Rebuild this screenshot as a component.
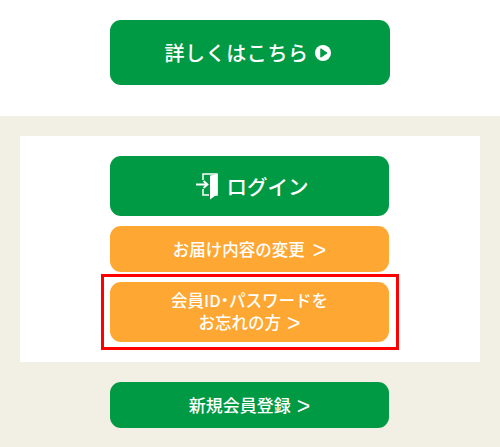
<div class="page">
  <section class="top">
    <a class="btn green big" href="#top">
      詳しくはこちら
      <svg class="play" viewBox="0 0 16 16" width="16" height="16" aria-hidden="true">
        <circle cx="8" cy="8" r="8" fill="#fff" />
        <path d="M5.8 3.8 L12 8 L5.8 12.2 Z" fill="#009a44" stroke="#009a44" stroke-width="1" stroke-linejoin="round" />
      </svg>
    </a>
  </section>

  <section class="member">
    <div class="panel">
      <a class="btn green login" href="#login">
        <svg class="door" viewBox="0 0 22 27" width="22" height="27" aria-hidden="true">
          <path d="M7 7 V1 H21 V22 H14" fill="none" stroke="#fff" stroke-width="1.5" />
          <path d="M7 16 V22 H13" fill="none" stroke="#fff" stroke-width="1.5" />
          <path d="M14 2.5 L21.5 1 V21 L14 26.5 Z" fill="#fff" />
          <path d="M0 11.5 H11 M7.5 8 L11.5 11.5 L7.5 15" fill="none" stroke="#fff" stroke-width="1.8" />
        </svg>
        ログイン
      </a>
      <a class="btn orange change" href="#change">
        <span>お届け内容の変更<span class="arrow">&gt;</span></span>
      </a>
      <div class="marked">
        <a class="btn orange forgot" href="#forgot">
          <span>会員ID<span class="dot">・</span>パスワードを<br />お忘れの方<span class="arrow">&gt;</span></span>
        </a>
        <div class="redbox"></div>
      </div>
    </div>
    <a class="btn green register" href="#register">
      <span>新規会員登録<span class="arrow">&gt;</span></span>
    </a>
  </section>
</div>

<style>
  :global(body) {
    margin: 0;
    background: #fff;
  }

  .page {
    width: 500px;
    height: 447px;
    overflow: hidden;
    font-family: "Noto Sans CJK JP", "Noto Sans", sans-serif;
    font-weight: 500;
  }

  .top {
    height: 116px;
    padding-top: 20px;
    box-sizing: border-box;
  }

  .member {
    height: 331px;
    box-sizing: border-box;
    padding: 20px 20px 0;
    background: #f2efe4;
  }

  .panel {
    display: flex;
    flex-direction: column;
    align-items: flex-start;
    gap: 10px;
    height: 226px;
    box-sizing: border-box;
    padding: 20px 0 0 90px;
    background: #fff;
  }

  .btn {
    display: flex;
    align-items: center;
    justify-content: center;
    box-sizing: border-box;
    width: 279px;
    border-radius: 11px;
    color: #fff;
    text-align: center;
    text-decoration: none;
  }

  .green {
    background: #009a44;
  }

  .orange {
    background: #ffa733;
  }

  .arrow {
    margin-left: 6px;
    font-family: "Liberation Sans", sans-serif;
    font-size: 23px;
    font-weight: 400;
    line-height: 1;
    vertical-align: -2px;
  }

  .dot {
    font-feature-settings: "palt";
  }

  .big {
    width: 280px;
    height: 65px;
    margin-left: 110px;
    padding-right: 5px;
    gap: 6px;
    font-size: 20px;
    letter-spacing: 0.6px;
  }

  .login {
    height: 60px;
    gap: 9px;
    padding-left: 5px;
    font-size: 20.5px;
  }

  .change {
    height: 46px;
    font-size: 16.5px;
  }

  .change .arrow {
    margin-left: 8px;
  }

  .forgot {
    height: 60px;
    font-size: 16.5px;
    line-height: 22px;
  }

  .marked {
    position: relative;
  }

  .redbox {
    position: absolute;
    top: -8px;
    left: -9px;
    width: 298px;
    height: 76px;
    box-sizing: border-box;
    border: 3px solid #f00;
  }

  .register {
    height: 46px;
    margin: 20px 0 0 90px;
    font-size: 17px;
  }
</style>
